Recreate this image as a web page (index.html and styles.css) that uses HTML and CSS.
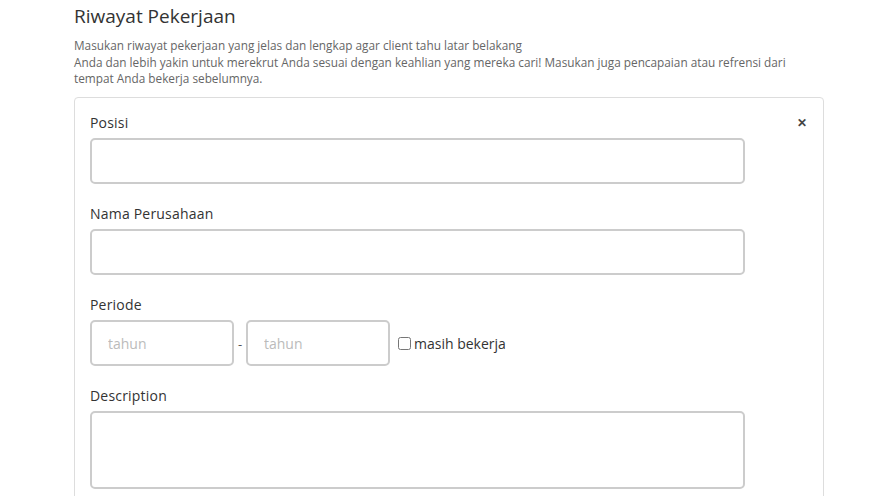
FILE: index.html
```html
<!DOCTYPE html>
<html>
<head>
<meta charset="utf-8">
<link rel="stylesheet" href="styles.css">
</head>
<body>
<div class="page">
  <h2 class="title">Riwayat Pekerjaan</h2>
  <p class="desc">Masukan riwayat pekerjaan yang jelas dan lengkap agar client tahu latar belakang<br>Anda dan lebih yakin untuk merekrut Anda sesuai dengan keahlian yang mereka cari! Masukan juga pencapaian atau refrensi dari tempat Anda bekerja sebelumnya.</p>
  <div class="card">
    <span class="close">&#x2715;</span>
    <div class="field">
      <label class="label">Posisi</label>
      <input class="input" type="text">
    </div>
    <div class="field">
      <label class="label">Nama Perusahaan</label>
      <input class="input" type="text">
    </div>
    <div class="field">
      <label class="label">Periode</label>
      <div class="period">
        <input class="input small" type="text" placeholder="tahun">
        <span class="dash">-</span>
        <input class="input small" type="text" placeholder="tahun">
        <label class="check"><input type="checkbox" class="cb">masih bekerja</label>
      </div>
    </div>
    <div class="field">
      <label class="label">Description</label>
      <textarea class="input area"></textarea>
    </div>
  </div>
</div>
</body>
</html>
```

FILE: styles.css
```css
* { box-sizing: border-box; }
body {
  margin: 0;
  font-family: "Open Sans", "Noto Sans", sans-serif;
  color: #333;
  background: #fff;
}
.page {
  padding: 3px 0 0 74px;
}
.title {
  margin: 0;
  font-size: 19px;
  font-weight: 400;
  line-height: 26px;
  color: #333;
}
.desc {
  margin: 8px 0 0;
  font-size: 11.8px;
  line-height: 16.5px;
  color: #666;
  width: 740px;
}
.card {
  position: relative;
  margin-top: 10px;
  width: 750px;
  border: 1px solid #ddd;
  border-radius: 4px;
  padding: 15px 15px 0;
}
.close {
  position: absolute;
  top: 18px;
  right: 16px;
  font-size: 12px;
  font-weight: 700;
  color: #444;
  line-height: 14px;
}
.field {
  margin-bottom: 20px;
}
.label {
  display: block;
  font-size: 14px;
  letter-spacing: 0.2px;
  line-height: 20px;
  margin-bottom: 5px;
  color: #333;
}
.input {
  display: block;
  width: 655px;
  height: 46px;
  border: 2px solid #ccc;
  border-radius: 5px;
  padding: 0 16px;
  font-family: "Open Sans", "Noto Sans", sans-serif;
  font-size: 14px;
  color: #333;
  background: #fff;
  outline: none;
}
.input::placeholder { color: #bbb; }
.period {
  display: flex;
  align-items: center;
}
.small {
  width: 144px;
  padding-top: 2px;
}
.dash {
  width: 12px;
  text-align: center;
  font-size: 13px;
  color: #555;
  padding-top: 2px;
}
.check {
  display: flex;
  align-items: center;
  margin-left: 7px;
  padding-top: 2px;
  font-size: 14px;
  color: #333;
}
.cb {
  margin: 0 3px 0 1px;
  width: 13px;
  height: 13px;
}
.area {
  height: 78px;
  resize: none;
}
```
